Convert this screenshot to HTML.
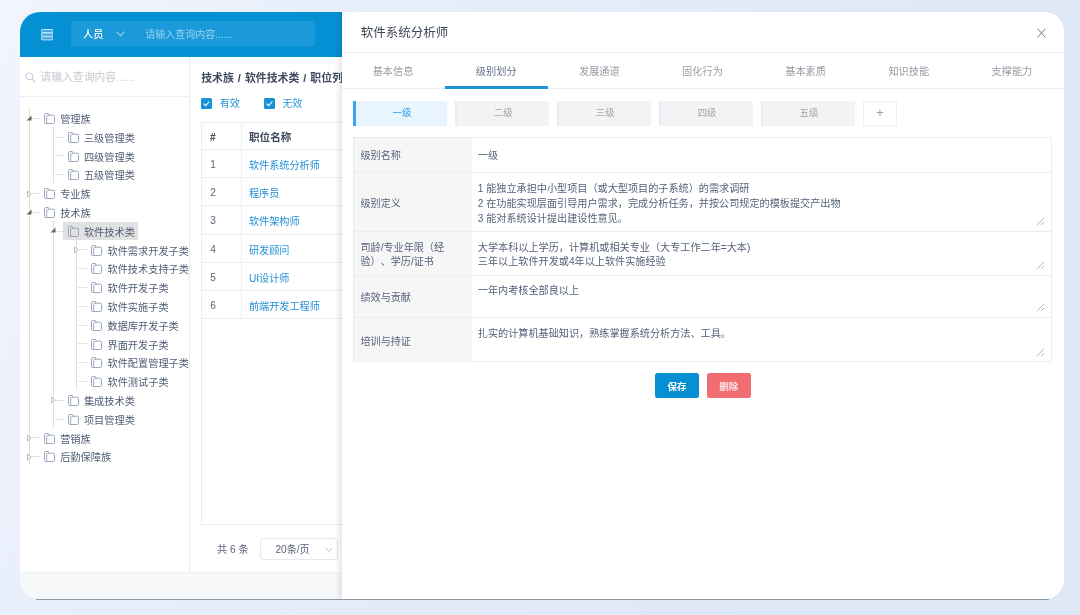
<!DOCTYPE html>
<html lang="zh-CN">
<head>
<meta charset="utf-8">
<title>软件系统分析师</title>
<style>
*{box-sizing:border-box;margin:0;padding:0}
html,body{width:1080px;height:615px;overflow:hidden}
body{text-spacing-trim:space-all;font-family:"Liberation Sans","Noto Sans CJK SC",sans-serif;background:linear-gradient(115deg,#f1f5fc 0%,#eaf0fb 20%,#e8eef9 27%,#e3eaf8 51%,#dfe8f7 75%,#dfe8f7 100%);position:relative;color:#515a6e}
.abs{position:absolute}
#card{will-change:transform;position:absolute;left:20px;top:12px;width:1044px;height:587px;border-radius:20px;background:#fff;overflow:hidden}
#shadowline{position:absolute;left:36px;top:598.5px;width:1013px;height:1.5px;background:#8c99a5;border-radius:1px}
/* header */
#hdr{position:absolute;left:0;top:0;width:322px;height:44.7px;background:#0590d3}
#hsearch{position:absolute;left:51px;top:9px;width:244px;height:25px;background:#1a9ad8;border-radius:1px}
.ht{position:absolute;color:#fff;font-size:10.5px;line-height:12px;white-space:nowrap}
/* tree */
#treepanel{position:absolute;left:0;top:44.7px;width:169.5px;height:516px;background:#fff;border-right:1px solid #e8eaec;overflow:hidden}
#tsearch{position:absolute;left:0;top:0;width:169px;height:40.1px;border-bottom:1px solid #eeeff1}
.node{position:absolute;font-size:10.2px;line-height:18.75px;height:18.75px;white-space:nowrap;color:#505d75}
.fi{position:absolute;width:11px;height:11px}
.vl{position:absolute;width:0;border-left:1px solid #dedede}
.hl{position:absolute;height:0;border-top:1px solid #e2e2e2}
/* main */
#main{position:absolute;left:170px;top:44.7px;width:152px;height:516px;background:#fff;overflow:hidden}
#foot{position:absolute;left:0;top:560px;width:322px;height:27px;background:#f7f8fa;border-top:1px solid #f0f1f3}
/* modal */
#modal{position:absolute;left:322px;top:0;width:722px;height:587px;background:#fff;box-shadow:-3px 0 6px rgba(0,0,0,.10)}

.bc{font-size:10.9px;line-height:13px;font-weight:bold;color:#3f4a5d;white-space:nowrap}
.sp{display:inline-block;width:11px;text-align:center}
.cb{position:absolute;width:10.8px;height:10.8px;background:#1a90d6;border-radius:1.5px}
.cb svg{position:absolute;left:0;top:0}
.cbl{font-size:10.1px;line-height:13px;color:#2a95d9;white-space:nowrap}
#tbl{position:absolute;left:11.2px;top:65.3px;width:160px;height:403.2px;border:1px solid #ebedf3}
#tbl .vd{position:absolute;left:38.9px;top:0;width:1px;height:196px;background:#eceef3}
.tr{position:absolute;left:0;width:160px;height:28.1px;border-bottom:1px solid #eceef3;font-size:10.15px;color:#5a6478}
.tr span{position:absolute;top:0;line-height:31.5px;white-space:nowrap}
.tr .c1{left:8.1px;line-height:30.3px}
.tr .c2{left:46.8px}
.tr.th{font-weight:bold;color:#3f4a5d}
.tr.th .c2{font-size:10.6px;line-height:29.5px}
.tr.th .c1{left:7.8px}
.lk{color:#2491d6}
.pg{font-size:10.15px;line-height:13px;color:#5a6478;white-space:nowrap}
#psel{position:absolute;left:70.4px;top:481.3px;width:77.6px;height:21.7px;border:1px solid #e6e8ef;border-radius:3px;font-size:10.15px;line-height:22px;color:#5a6478}
#psel span{position:absolute;left:14px;top:0;white-space:nowrap}
.mt{font-size:12.5px;line-height:18px;color:#3c4555;white-space:nowrap}
#tabs{position:absolute;left:-0.5px;top:40.7px;width:722px;height:35px;display:flex}
#tabs span{flex:1;text-align:center;font-size:10.2px;line-height:38.5px;color:#979ba4;white-space:nowrap}
#tabs span.on{color:#63718b}
.lv{position:absolute;top:88.7px;width:94.2px;height:25px;background:#f3f3f5;border-left:2.5px solid #e9ebf6;font-size:9.4px;line-height:24.6px;text-align:center;color:#a3a4a7;white-space:nowrap}
.lv.on{background:#e9f5fe;border-left:3.2px solid #3aa6f2;color:#2d9be0}
.lv.add{width:34.4px;background:#fff;border:1px solid #eef0f4;color:#95a1b4;font-size:13.5px;line-height:22px}
#form{position:absolute;left:11.3px;top:124.7px;width:698.7px;height:225px;border:1px solid #ececee}
.fr{position:absolute;left:0;width:696.7px;border-bottom:1px solid #ececee}
.fl{position:absolute;left:0;top:0;width:117.5px;height:100%;background:#f6f6f7;display:flex;align-items:center;padding-left:6.2px;padding-top:4px;font-size:10.1px;line-height:14.5px;color:#56627a}
.fv{position:absolute;left:123.5px;font-size:10.15px;line-height:14.8px;color:#56627a;white-space:nowrap}
.rz{position:absolute;right:7px;bottom:6px;width:7px;height:7px;background:linear-gradient(135deg,transparent 0 48%,#b4b4b4 48% 57%,transparent 57% 72%,#b4b4b4 72% 81%,transparent 82%)}
.btn{position:absolute;top:360.7px;width:44px;height:25.2px;border-radius:2.5px;color:#fff;font-size:9.5px;font-weight:bold;line-height:28px;text-align:center;white-space:nowrap}
</style>
</head>
<body>
<div id="shadowline"></div>
<div id="card">
  <div id="hdr">
    <svg class="abs" style="left:20.8px;top:17.3px" width="12.4" height="11.4" viewBox="0 0 12.4 11.4"><g fill="#3fa9df" stroke="#c4e5f6" stroke-width="1"><rect x="0.5" y="0.5" width="11.4" height="3.2" rx="0.9"/><rect x="0.5" y="4.1" width="11.4" height="3.2" rx="0.9"/><rect x="0.5" y="7.7" width="11.4" height="3.2" rx="0.9"/></g></svg>
    <div id="hsearch"></div>
    <div class="ht" style="left:63px;top:16.8px;font-weight:500;font-size:10.2px">人员</div>
    <svg class="abs" style="left:95.8px;top:18.8px" width="9" height="6" viewBox="0 0 9 6"><path d="M0.6 0.6 L4.5 4.8 L8.4 0.6" fill="none" stroke="#9fd6f1" stroke-width="1.1"/></svg>
    <div class="ht" style="left:125.3px;top:17px;color:#9ad4f1;font-size:10px">请输入查询内容......</div>
  </div>
  <div id="treepanel">
    <div id="tsearch">
      <svg class="abs" style="left:5px;top:15px" width="11" height="11" viewBox="0 0 11 11"><circle cx="4.3" cy="4.3" r="3.5" fill="none" stroke="#c5c8ce" stroke-width="1"/><path d="M7 7 L10.3 10.3" stroke="#c5c8ce" stroke-width="1.2"/></svg>
      <div class="abs" style="left:20.3px;top:14.2px;font-size:10.85px;line-height:12px;color:#c5c8ce;white-space:nowrap">请输入查询内容......</div>
    </div>
    <div id="tree">
    <div class="vl" style="left:9.0px;top:52.0px;height:356.1px"></div>
    <div class="vl" style="left:32.8px;top:70.8px;height:55.3px"></div>
    <div class="vl" style="left:32.8px;top:164.8px;height:205.7px"></div>
    <div class="vl" style="left:55.9px;top:183.6px;height:149.3px"></div>
    <div class="hl" style="left:11.0px;top:61.2px;width:8.5px"></div>
    <svg class="abs" style="left:6.3px;top:58.0px" width="6" height="6" viewBox="0 0 6 6"><path d="M5.5 0.6V5.6H0.5Z" fill="#646464"/></svg>
    <svg class="fi" style="left:24.1px;top:56.3px" viewBox="0 0 11 11"><path d="M2.7 10.5H1.7Q0.5 10.5 0.5 9.3V1.7Q0.5 0.5 1.7 0.5H4.3L5.3 2.2H9.3Q10.5 2.2 10.5 3.4V9.3Q10.5 10.5 9.3 10.5H2.7V3.3Q2.7 2.4 3.6 2.4H5.3" fill="none" stroke="#909eb8" stroke-width="0.9"/></svg>
    <div class="node" style="left:40.2px;top:54.4px">管理族</div>
    <div class="hl" style="left:34.8px;top:80.0px;width:9px"></div>
    <svg class="fi" style="left:47.8px;top:75.1px" viewBox="0 0 11 11"><path d="M2.7 10.5H1.7Q0.5 10.5 0.5 9.3V1.7Q0.5 0.5 1.7 0.5H4.3L5.3 2.2H9.3Q10.5 2.2 10.5 3.4V9.3Q10.5 10.5 9.3 10.5H2.7V3.3Q2.7 2.4 3.6 2.4H5.3" fill="none" stroke="#909eb8" stroke-width="0.9"/></svg>
    <div class="node" style="left:63.9px;top:73.2px">三级管理类</div>
    <div class="hl" style="left:34.8px;top:98.8px;width:9px"></div>
    <svg class="fi" style="left:47.8px;top:93.9px" viewBox="0 0 11 11"><path d="M2.7 10.5H1.7Q0.5 10.5 0.5 9.3V1.7Q0.5 0.5 1.7 0.5H4.3L5.3 2.2H9.3Q10.5 2.2 10.5 3.4V9.3Q10.5 10.5 9.3 10.5H2.7V3.3Q2.7 2.4 3.6 2.4H5.3" fill="none" stroke="#909eb8" stroke-width="0.9"/></svg>
    <div class="node" style="left:63.9px;top:92.0px">四级管理类</div>
    <div class="hl" style="left:34.8px;top:117.6px;width:9px"></div>
    <svg class="fi" style="left:47.8px;top:112.7px" viewBox="0 0 11 11"><path d="M2.7 10.5H1.7Q0.5 10.5 0.5 9.3V1.7Q0.5 0.5 1.7 0.5H4.3L5.3 2.2H9.3Q10.5 2.2 10.5 3.4V9.3Q10.5 10.5 9.3 10.5H2.7V3.3Q2.7 2.4 3.6 2.4H5.3" fill="none" stroke="#909eb8" stroke-width="0.9"/></svg>
    <div class="node" style="left:63.9px;top:110.8px">五级管理类</div>
    <div class="hl" style="left:11.0px;top:136.4px;width:8.5px"></div>
    <svg class="abs" style="left:7.2px;top:132.9px" width="5" height="8" viewBox="0 0 5 8"><path d="M0.6 1.1L4 4L0.6 6.9Z" fill="#fff" stroke="#a6a6a6" stroke-width="0.8"/></svg>
    <svg class="fi" style="left:24.1px;top:131.5px" viewBox="0 0 11 11"><path d="M2.7 10.5H1.7Q0.5 10.5 0.5 9.3V1.7Q0.5 0.5 1.7 0.5H4.3L5.3 2.2H9.3Q10.5 2.2 10.5 3.4V9.3Q10.5 10.5 9.3 10.5H2.7V3.3Q2.7 2.4 3.6 2.4H5.3" fill="none" stroke="#909eb8" stroke-width="0.9"/></svg>
    <div class="node" style="left:40.2px;top:129.6px">专业族</div>
    <div class="hl" style="left:11.0px;top:155.2px;width:8.5px"></div>
    <svg class="abs" style="left:6.3px;top:152.0px" width="6" height="6" viewBox="0 0 6 6"><path d="M5.5 0.6V5.6H0.5Z" fill="#646464"/></svg>
    <svg class="fi" style="left:24.1px;top:150.3px" viewBox="0 0 11 11"><path d="M2.7 10.5H1.7Q0.5 10.5 0.5 9.3V1.7Q0.5 0.5 1.7 0.5H4.3L5.3 2.2H9.3Q10.5 2.2 10.5 3.4V9.3Q10.5 10.5 9.3 10.5H2.7V3.3Q2.7 2.4 3.6 2.4H5.3" fill="none" stroke="#909eb8" stroke-width="0.9"/></svg>
    <div class="node" style="left:40.2px;top:148.4px">技术族</div>
    <div class="hl" style="left:34.8px;top:174.0px;width:9px"></div>
    <div class="abs" style="left:43.3px;top:165.1px;width:74.7px;height:18.4px;background:#e1e1e1"></div>
    <svg class="abs" style="left:30.1px;top:170.8px" width="6" height="6" viewBox="0 0 6 6"><path d="M5.5 0.6V5.6H0.5Z" fill="#646464"/></svg>
    <svg class="fi" style="left:47.8px;top:169.1px" viewBox="0 0 11 11"><path d="M2.7 10.5H1.7Q0.5 10.5 0.5 9.3V1.7Q0.5 0.5 1.7 0.5H4.3L5.3 2.2H9.3Q10.5 2.2 10.5 3.4V9.3Q10.5 10.5 9.3 10.5H2.7V3.3Q2.7 2.4 3.6 2.4H5.3" fill="none" stroke="#909eb8" stroke-width="0.9"/></svg>
    <div class="node" style="left:63.9px;top:167.2px">软件技术类</div>
    <div class="hl" style="left:57.9px;top:192.8px;width:9px"></div>
    <svg class="abs" style="left:54.1px;top:189.3px" width="5" height="8" viewBox="0 0 5 8"><path d="M0.6 1.1L4 4L0.6 6.9Z" fill="#fff" stroke="#a6a6a6" stroke-width="0.8"/></svg>
    <svg class="fi" style="left:71.3px;top:187.9px" viewBox="0 0 11 11"><path d="M2.7 10.5H1.7Q0.5 10.5 0.5 9.3V1.7Q0.5 0.5 1.7 0.5H4.3L5.3 2.2H9.3Q10.5 2.2 10.5 3.4V9.3Q10.5 10.5 9.3 10.5H2.7V3.3Q2.7 2.4 3.6 2.4H5.3" fill="none" stroke="#909eb8" stroke-width="0.9"/></svg>
    <div class="node" style="left:87.5px;top:186.0px">软件需求开发子类</div>
    <div class="hl" style="left:57.9px;top:211.6px;width:9px"></div>
    <svg class="fi" style="left:71.3px;top:206.7px" viewBox="0 0 11 11"><path d="M2.7 10.5H1.7Q0.5 10.5 0.5 9.3V1.7Q0.5 0.5 1.7 0.5H4.3L5.3 2.2H9.3Q10.5 2.2 10.5 3.4V9.3Q10.5 10.5 9.3 10.5H2.7V3.3Q2.7 2.4 3.6 2.4H5.3" fill="none" stroke="#909eb8" stroke-width="0.9"/></svg>
    <div class="node" style="left:87.5px;top:204.8px">软件技术支持子类</div>
    <div class="hl" style="left:57.9px;top:230.4px;width:9px"></div>
    <svg class="fi" style="left:71.3px;top:225.5px" viewBox="0 0 11 11"><path d="M2.7 10.5H1.7Q0.5 10.5 0.5 9.3V1.7Q0.5 0.5 1.7 0.5H4.3L5.3 2.2H9.3Q10.5 2.2 10.5 3.4V9.3Q10.5 10.5 9.3 10.5H2.7V3.3Q2.7 2.4 3.6 2.4H5.3" fill="none" stroke="#909eb8" stroke-width="0.9"/></svg>
    <div class="node" style="left:87.5px;top:223.6px">软件开发子类</div>
    <div class="hl" style="left:57.9px;top:249.2px;width:9px"></div>
    <svg class="fi" style="left:71.3px;top:244.3px" viewBox="0 0 11 11"><path d="M2.7 10.5H1.7Q0.5 10.5 0.5 9.3V1.7Q0.5 0.5 1.7 0.5H4.3L5.3 2.2H9.3Q10.5 2.2 10.5 3.4V9.3Q10.5 10.5 9.3 10.5H2.7V3.3Q2.7 2.4 3.6 2.4H5.3" fill="none" stroke="#909eb8" stroke-width="0.9"/></svg>
    <div class="node" style="left:87.5px;top:242.4px">软件实施子类</div>
    <div class="hl" style="left:57.9px;top:268.0px;width:9px"></div>
    <svg class="fi" style="left:71.3px;top:263.1px" viewBox="0 0 11 11"><path d="M2.7 10.5H1.7Q0.5 10.5 0.5 9.3V1.7Q0.5 0.5 1.7 0.5H4.3L5.3 2.2H9.3Q10.5 2.2 10.5 3.4V9.3Q10.5 10.5 9.3 10.5H2.7V3.3Q2.7 2.4 3.6 2.4H5.3" fill="none" stroke="#909eb8" stroke-width="0.9"/></svg>
    <div class="node" style="left:87.5px;top:261.2px">数据库开发子类</div>
    <div class="hl" style="left:57.9px;top:286.8px;width:9px"></div>
    <svg class="fi" style="left:71.3px;top:281.9px" viewBox="0 0 11 11"><path d="M2.7 10.5H1.7Q0.5 10.5 0.5 9.3V1.7Q0.5 0.5 1.7 0.5H4.3L5.3 2.2H9.3Q10.5 2.2 10.5 3.4V9.3Q10.5 10.5 9.3 10.5H2.7V3.3Q2.7 2.4 3.6 2.4H5.3" fill="none" stroke="#909eb8" stroke-width="0.9"/></svg>
    <div class="node" style="left:87.5px;top:280.0px">界面开发子类</div>
    <div class="hl" style="left:57.9px;top:305.6px;width:9px"></div>
    <svg class="fi" style="left:71.3px;top:300.7px" viewBox="0 0 11 11"><path d="M2.7 10.5H1.7Q0.5 10.5 0.5 9.3V1.7Q0.5 0.5 1.7 0.5H4.3L5.3 2.2H9.3Q10.5 2.2 10.5 3.4V9.3Q10.5 10.5 9.3 10.5H2.7V3.3Q2.7 2.4 3.6 2.4H5.3" fill="none" stroke="#909eb8" stroke-width="0.9"/></svg>
    <div class="node" style="left:87.5px;top:298.8px">软件配置管理子类</div>
    <div class="hl" style="left:57.9px;top:324.4px;width:9px"></div>
    <svg class="fi" style="left:71.3px;top:319.5px" viewBox="0 0 11 11"><path d="M2.7 10.5H1.7Q0.5 10.5 0.5 9.3V1.7Q0.5 0.5 1.7 0.5H4.3L5.3 2.2H9.3Q10.5 2.2 10.5 3.4V9.3Q10.5 10.5 9.3 10.5H2.7V3.3Q2.7 2.4 3.6 2.4H5.3" fill="none" stroke="#909eb8" stroke-width="0.9"/></svg>
    <div class="node" style="left:87.5px;top:317.6px">软件测试子类</div>
    <div class="hl" style="left:34.8px;top:343.2px;width:9px"></div>
    <svg class="abs" style="left:31.0px;top:339.7px" width="5" height="8" viewBox="0 0 5 8"><path d="M0.6 1.1L4 4L0.6 6.9Z" fill="#fff" stroke="#a6a6a6" stroke-width="0.8"/></svg>
    <svg class="fi" style="left:47.8px;top:338.3px" viewBox="0 0 11 11"><path d="M2.7 10.5H1.7Q0.5 10.5 0.5 9.3V1.7Q0.5 0.5 1.7 0.5H4.3L5.3 2.2H9.3Q10.5 2.2 10.5 3.4V9.3Q10.5 10.5 9.3 10.5H2.7V3.3Q2.7 2.4 3.6 2.4H5.3" fill="none" stroke="#909eb8" stroke-width="0.9"/></svg>
    <div class="node" style="left:63.9px;top:336.4px">集成技术类</div>
    <div class="hl" style="left:34.8px;top:362.0px;width:9px"></div>
    <svg class="fi" style="left:47.8px;top:357.1px" viewBox="0 0 11 11"><path d="M2.7 10.5H1.7Q0.5 10.5 0.5 9.3V1.7Q0.5 0.5 1.7 0.5H4.3L5.3 2.2H9.3Q10.5 2.2 10.5 3.4V9.3Q10.5 10.5 9.3 10.5H2.7V3.3Q2.7 2.4 3.6 2.4H5.3" fill="none" stroke="#909eb8" stroke-width="0.9"/></svg>
    <div class="node" style="left:63.9px;top:355.2px">项目管理类</div>
    <div class="hl" style="left:11.0px;top:380.8px;width:8.5px"></div>
    <svg class="abs" style="left:7.2px;top:377.3px" width="5" height="8" viewBox="0 0 5 8"><path d="M0.6 1.1L4 4L0.6 6.9Z" fill="#fff" stroke="#a6a6a6" stroke-width="0.8"/></svg>
    <svg class="fi" style="left:24.1px;top:375.9px" viewBox="0 0 11 11"><path d="M2.7 10.5H1.7Q0.5 10.5 0.5 9.3V1.7Q0.5 0.5 1.7 0.5H4.3L5.3 2.2H9.3Q10.5 2.2 10.5 3.4V9.3Q10.5 10.5 9.3 10.5H2.7V3.3Q2.7 2.4 3.6 2.4H5.3" fill="none" stroke="#909eb8" stroke-width="0.9"/></svg>
    <div class="node" style="left:40.2px;top:374.0px">营销族</div>
    <div class="hl" style="left:11.0px;top:399.6px;width:8.5px"></div>
    <svg class="abs" style="left:7.2px;top:396.1px" width="5" height="8" viewBox="0 0 5 8"><path d="M0.6 1.1L4 4L0.6 6.9Z" fill="#fff" stroke="#a6a6a6" stroke-width="0.8"/></svg>
    <svg class="fi" style="left:24.1px;top:394.7px" viewBox="0 0 11 11"><path d="M2.7 10.5H1.7Q0.5 10.5 0.5 9.3V1.7Q0.5 0.5 1.7 0.5H4.3L5.3 2.2H9.3Q10.5 2.2 10.5 3.4V9.3Q10.5 10.5 9.3 10.5H2.7V3.3Q2.7 2.4 3.6 2.4H5.3" fill="none" stroke="#909eb8" stroke-width="0.9"/></svg>
    <div class="node" style="left:40.2px;top:392.8px">后勤保障族</div>
    </div>
  </div>
  <div id="main">
    <div class="abs bc" style="left:11.2px;top:15px">技术族<span class="sp">/</span>软件技术类<span class="sp">/</span>职位列表</div>
    <div class="cb" style="left:11.2px;top:41.3px"><svg width="11" height="11" viewBox="0 0 11 11"><path d="M2.6 5.6L4.6 7.6L8.4 3.5" fill="none" stroke="#fff" stroke-width="1.1"/></svg></div>
    <div class="abs cbl" style="left:29.7px;top:40.5px">有效</div>
    <div class="cb" style="left:73.8px;top:41.3px"><svg width="11" height="11" viewBox="0 0 11 11"><path d="M2.6 5.6L4.6 7.6L8.4 3.5" fill="none" stroke="#fff" stroke-width="1.1"/></svg></div>
    <div class="abs cbl" style="left:92.2px;top:40.5px">无效</div>
    <div id="tbl">
      <div class="vd"></div>
      <div class="tr th" style="top:0;height:27.3px"><span class="c1">#</span><span class="c2">职位名称</span></div>
      <div class="tr" style="top:27.3px"><span class="c1">1</span><span class="c2 lk">软件系统分析师</span></div>
      <div class="tr" style="top:55.4px"><span class="c1">2</span><span class="c2 lk">程序员</span></div>
      <div class="tr" style="top:83.5px"><span class="c1">3</span><span class="c2 lk">软件架构师</span></div>
      <div class="tr" style="top:111.6px"><span class="c1">4</span><span class="c2 lk">研发顾问</span></div>
      <div class="tr" style="top:139.7px"><span class="c1">5</span><span class="c2 lk">UI设计师</span></div>
      <div class="tr" style="top:167.8px"><span class="c1">6</span><span class="c2 lk">前端开发工程师</span></div>
    </div>
    <div class="abs pg" style="left:27px;top:486.3px">共 6 条</div>
    <div id="psel"><span>20条/页</span><svg class="abs" style="left:64px;top:8px" width="8" height="6" viewBox="0 0 8 6"><path d="M0.8 1L4 4.4L7.2 1" fill="none" stroke="#b8bcc4" stroke-width="1"/></svg></div>

  </div>
  <div id="foot"></div>
  <div id="modal">
    <div class="abs mt" style="left:18.7px;top:11.5px">软件系统分析师</div>
    <svg class="abs" style="left:695.3px;top:15.7px" width="9" height="10" viewBox="0 0 9 10"><path d="M0.6 0.6L8.4 9.4M8.4 0.6L0.6 9.4" stroke="#7a7a7a" stroke-width="1" fill="none"/></svg>
    <div class="abs" style="left:0;top:39.7px;width:722px;height:1px;background:#eff0f2"></div>
    <div id="tabs"><span>基本信息</span><span class="on">级别划分</span><span>发展通道</span><span>固化行为</span><span>基本素质</span><span>知识技能</span><span>支撑能力</span></div>
    <div class="abs" style="left:0;top:75.7px;width:722px;height:1px;background:#eceef1"></div>
    <div class="abs" style="left:103px;top:74.1px;width:103px;height:2.5px;background:#1e95d8"></div>
    <div class="lv on" style="left:11.3px">一级</div>
    <div class="lv" style="left:113.2px">二级</div>
    <div class="lv" style="left:215.1px">三级</div>
    <div class="lv" style="left:317px">四级</div>
    <div class="lv" style="left:418.9px">五级</div>
    <div class="lv add" style="left:520.8px">+</div>
    <div id="form">
      <div class="fr" style="top:0;height:35.1px"><div class="fl"><span>级别名称</span></div><div class="fv" style="top:11px">一级</div></div>
      <div class="fr" style="top:35.1px;height:59.3px"><div class="fl"><span>级别定义</span></div><div class="fv" style="top:8.5px;line-height:15px">1 能独立承担中小型项目（或大型项目的子系统）的需求调研<br>2 在功能实现层面引导用户需求，完成分析任务，并按公司规定的模板提交产出物<br>3 能对系统设计提出建设性意见。</div><i class="rz"></i></div>
      <div class="fr" style="top:94.4px;height:43.5px"><div class="fl"><span>司龄/专业年限（经<br>验）、学历/证书</span></div><div class="fv" style="top:8.6px">大学本科以上学历，计算机或相关专业（大专工作二年=大本)<br>三年以上软件开发或4年以上软件实施经验</div><i class="rz"></i></div>
      <div class="fr" style="top:137.9px;height:42.6px"><div class="fl"><span>绩效与贡献</span></div><div class="fv" style="top:8.6px">一年内考核全部良以上</div><i class="rz"></i></div>
      <div class="fr" style="top:180.5px;height:43.4px;border-bottom:0"><div class="fl"><span>培训与持证</span></div><div class="fv" style="top:8.6px">扎实的计算机基础知识，熟练掌握系统分析方法、工具。</div><i class="rz"></i></div>
    </div>
    <div class="btn" style="left:313px;background:#0690d3">保存</div>
    <div class="btn" style="left:364.7px;background:#f26d71;color:rgba(255,255,255,.82)">删除</div>

  </div>
</div>
</body>
</html>
